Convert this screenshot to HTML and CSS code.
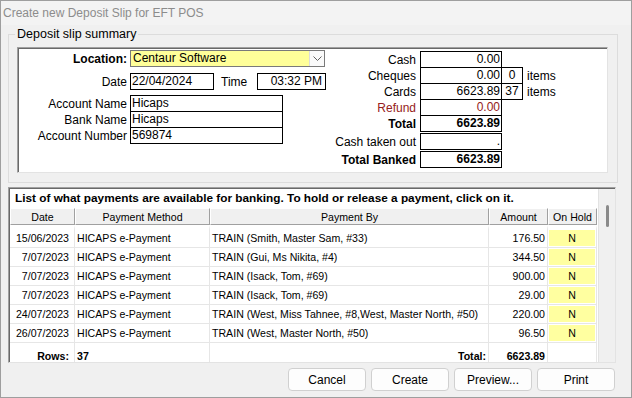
FILE: index.html
```html
<!DOCTYPE html>
<html lang="en">
<head>
    <meta charset="UTF-8">
    <title>Create new Deposit Slip for EFT POS</title>
    <link rel="stylesheet" href="styles.css">
</head>
<body>
    <div class="window">
        <div class="titlebar">Create new Deposit Slip for EFT POS</div>
        <div class="content">
            <fieldset class="summary">
                <legend>Deposit slip summary</legend>
                <div class="panel">
                    <div class="left">
                        <div class="row loc-row">
                            <span class="lbl bold">Location:</span>
                            <div class="combo">
                                <span class="combo-text">Centaur Software</span>
                                <span class="combo-btn">
                                    <svg width="9" height="5" viewBox="0 0 9 5"><polyline points="0.5,0.5 4.5,4.5 8.5,0.5" fill="none" stroke="#606060" stroke-width="1"/></svg>
                                </span>
                            </div>
                        </div>
                        <div class="row date-row">
                            <span class="lbl">Date</span>
                            <div class="box date-box">22/04/2024</div>
                            <span class="time-lbl">Time</span>
                            <div class="box time-box">03:32 PM</div>
                        </div>
                        <div class="acct">
                            <div class="row"><span class="lbl">Account Name</span><div class="box acct-box">Hicaps</div></div>
                            <div class="row"><span class="lbl">Bank Name</span><div class="box acct-box">Hicaps</div></div>
                            <div class="row"><span class="lbl">Account Number</span><div class="box acct-box">569874</div></div>
                        </div>
                    </div>
                    <div class="right">
                        <div class="trow"><span class="tlbl">Cash</span><div class="tval">0.00</div></div>
                        <div class="trow"><span class="tlbl">Cheques</span><div class="tval">0.00</div><div class="tcount">0</div><span class="items">items</span></div>
                        <div class="trow"><span class="tlbl">Cards</span><div class="tval">6623.89</div><div class="tcount">37</div><span class="items">items</span></div>
                        <div class="trow refund"><span class="tlbl">Refund</span><div class="tval">0.00</div></div>
                        <div class="trow bold"><span class="tlbl">Total</span><div class="tval">6623.89</div></div>
                        <div class="trow spaced"><span class="tlbl">Cash taken out</span><div class="tval">.</div></div>
                        <div class="trow spaced bold"><span class="tlbl">Total Banked</span><div class="tval">6623.89</div></div>
                    </div>
                </div>
            </fieldset>

            <div class="list">
                <div class="list-main">
                    <div class="list-title">List of what payments are available for banking. To hold or release a payment, click on it.</div>
                    <table class="grid">
                        <colgroup>
                            <col style="width:65px">
                            <col style="width:135px">
                            <col style="width:279px">
                            <col style="width:59px">
                            <col style="width:49px">
                        </colgroup>
                        <thead>
                            <tr><th>Date</th><th>Payment Method</th><th>Payment By</th><th>Amount</th><th>On Hold</th></tr>
                        </thead>
                        <tbody>
                            <tr><td class="c-date">15/06/2023</td><td>HICAPS e-Payment</td><td>TRAIN (Smith, Master Sam, #33)</td><td class="c-amt">176.50</td><td class="c-hold">N</td></tr>
                            <tr><td class="c-date">7/07/2023</td><td>HICAPS e-Payment</td><td>TRAIN (Gui, Ms Nikita, #4)</td><td class="c-amt">344.50</td><td class="c-hold">N</td></tr>
                            <tr><td class="c-date">7/07/2023</td><td>HICAPS e-Payment</td><td>TRAIN (Isack, Tom, #69)</td><td class="c-amt">900.00</td><td class="c-hold">N</td></tr>
                            <tr><td class="c-date">7/07/2023</td><td>HICAPS e-Payment</td><td>TRAIN (Isack, Tom, #69)</td><td class="c-amt">29.00</td><td class="c-hold">N</td></tr>
                            <tr><td class="c-date">24/07/2023</td><td>HICAPS e-Payment</td><td>TRAIN (West, Miss Tahnee, #8,West, Master North, #50)</td><td class="c-amt">220.00</td><td class="c-hold">N</td></tr>
                            <tr><td class="c-date">26/07/2023</td><td>HICAPS e-Payment</td><td>TRAIN (West, Master North, #50)</td><td class="c-amt">96.50</td><td class="c-hold">N</td></tr>
                        </tbody>
                        <tfoot>
                            <tr><td class="c-date">Rows:</td><td>37</td><td class="c-amt">Total:</td><td class="c-amt">6623.89</td><td></td></tr>
                        </tfoot>
                    </table>
                </div>
                <div class="scrollbar"><div class="thumb"></div></div>
            </div>

            <div class="buttons">
                <button>Cancel</button>
                <button>Create</button>
                <button>Preview...</button>
                <button>Print</button>
            </div>
        </div>
    </div>
</body>
</html>
```

FILE: styles.css
```css
* {
    box-sizing: border-box;
}
body {
    margin: 0;
    font-family: "Liberation Sans", Arial, sans-serif;
    font-size: 12px;
    color: #000;
    background: #f0f0f0;
}
.bold {
    font-weight: bold;
}
.window {
    width: 632px;
    height: 398px;
    border: 1px solid #9e9e9e;
    background: #f0f0f0;
}
.titlebar {
    height: 24px;
    line-height: 24px;
    padding-left: 2px;
    color: #8c8c8c;
    background: #f3f3f3;
}
.content {
    padding-left: 7px;
}

/* summary group */
.summary {
    width: 610px;
    margin: 2px 0 0 0;
    padding: 5px 9px 9px 8px;
    border: 1px solid #dcdcdc;
}
.summary legend {
    padding: 0 2px;
    margin-left: -2px;
    line-height: 15px;
    font-size: 12.5px;
}
.panel {
    display: flex;
    height: 126px;
    background: #fff;
    border-top: 1px solid #a0a0a0;
    border-left: 1px solid #a0a0a0;
    border-right: 1px solid #e3e3e3;
    border-bottom: 1px solid #e3e3e3;
    box-shadow: inset 1px 1px 0 #696969;
    padding: 1px 0 0 1px;
}
.left {
    width: 309px;
}
.row {
    display: flex;
    align-items: center;
    height: 17px;
}
.lbl {
    width: 111px;
    padding-right: 3px;
    text-align: right;
    white-space: nowrap;
}
.loc-row {
    margin-top: 1px;
}
.combo {
    display: flex;
    width: 195px;
    height: 17px;
    border: 1px solid #7a7a7a;
    background: #ffff99;
}
.combo-text {
    flex: 1;
    padding-left: 2px;
    line-height: 15px;
}
.combo-btn {
    width: 15px;
    display: flex;
    align-items: center;
    justify-content: center;
    background: #fafafa;
    border-left: 1px solid #dcdcdc;
}
.box {
    height: 17px;
    border: 1px solid #000;
    line-height: 15px;
    padding-left: 1px;
    white-space: nowrap;
}
.date-row {
    margin-top: 6px;
}
.date-box {
    width: 84px;
}
.time-lbl {
    width: 43px;
    padding-left: 7px;
}
.time-box {
    width: 69px;
    text-align: right;
    padding-right: 3px;
}
.acct {
    margin-top: 5px;
}
.acct .row + .row {
    margin-top: -1px;
}
.acct-box {
    width: 153px;
}

/* totals */
.right {
    padding-top: 2px;
}
.trow {
    display: flex;
    align-items: center;
    height: 17px;
}
.trow + .trow {
    margin-top: -1px;
}
.trow.spaced {
    margin-top: 1px;
}
.tlbl {
    width: 92px;
    padding-right: 4px;
    text-align: right;
    white-space: nowrap;
}
.tval {
    width: 82px;
    height: 17px;
    border: 1px solid #000;
    line-height: 15px;
    text-align: right;
    padding-right: 1px;
}
.tcount {
    width: 22px;
    height: 17px;
    margin-left: -1px;
    border: 1px solid #000;
    line-height: 15px;
    text-align: center;
}
.items {
    padding-left: 4px;
}
.refund {
    color: #962020;
}

/* payments list */
.list {
    display: flex;
    width: 608px;
    height: 176px;
    margin-top: 4px;
    background: #fff;
    border-top: 1px solid #a0a0a0;
    border-left: 1px solid #a0a0a0;
    border-right: 1px solid #e3e3e3;
    border-bottom: 1px solid #e3e3e3;
    box-shadow: inset 1px 1px 0 #696969;
    padding: 1px 0 0 1px;
}
.list-main {
    width: 588px;
    overflow: hidden;
}
.list-title {
    height: 19px;
    line-height: 19px;
    padding-left: 5px;
    font-weight: bold;
    font-size: 11.8px;
    white-space: nowrap;
}
.grid {
    width: 587px;
    table-layout: fixed;
    border-collapse: separate;
    border-spacing: 0;
    font-size: 10.6px;
}
.grid th {
    height: 17px;
    padding: 0;
    font-weight: normal;
    background: #f0f0f0;
    border-top: 1px solid #fff;
    border-left: 1px solid #fff;
    border-right: 1px solid #a0a0a0;
    border-bottom: 1px solid #a0a0a0;
}
.grid td {
    height: 19px;
    padding: 0 2px;
    white-space: nowrap;
    overflow: hidden;
    border-right: 1px solid #e6e6e6;
    border-bottom: 1px solid #e6e6e6;
}
.grid tbody tr:first-child td {
    height: 23px;
    border-top: 4px solid #fff;
}
.grid td.c-date {
    text-align: right;
    padding-right: 5px;
}
.grid td.c-amt {
    text-align: right;
}
.grid td.c-hold {
    text-align: center;
    background: #ffffa0;
    background-clip: padding-box;
    box-shadow: inset 0 0 0 1px #fff;
}
.grid tfoot td {
    height: 22px;
    padding-top: 4px;
    font-weight: bold;
    border-bottom: none;
}
.scrollbar {
    width: 17px;
    background: #f0f0f0;
    border-left: 1px solid #e2e2e2;
    display: flex;
    flex-direction: column;
    align-items: center;
}
.thumb {
    width: 3px;
    height: 22px;
    margin-top: 16px;
    background: #8a8a8a;
    border-radius: 2px;
}

/* buttons */
.buttons {
    display: flex;
    justify-content: flex-end;
    gap: 5px;
    margin-top: 5px;
    padding-right: 16px;
}
.buttons button {
    width: 78px;
    height: 23px;
    font-family: "Liberation Sans", Arial, sans-serif;
    font-size: 12px;
    color: #000;
    background: #fdfdfd;
    border: 1px solid #d0d0d0;
    border-radius: 4px;
}
```
